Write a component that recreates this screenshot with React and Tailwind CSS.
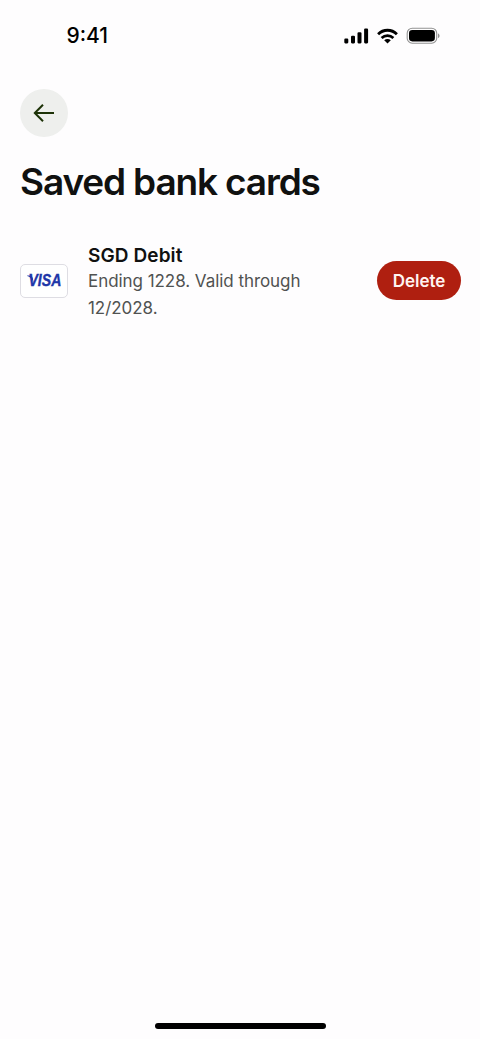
function StatusBar() {
  return (
    <div className="flex h-[72px] items-center justify-between pr-[40px] pl-[66.5px]">
      <span className="text-[21px] leading-6 font-[550] tracking-[0px] text-black">9:41</span>
      <div className="flex items-center">
        <svg className="h-4 w-[25px]" viewBox="0 0 25 16" fill="black" aria-label="Signal">
          <rect x="0.3" y="10.6" width="4" height="4.8" rx="1.1" />
          <rect x="7" y="7.8" width="4" height="7.6" rx="1.1" />
          <rect x="13.5" y="4.3" width="4" height="11.1" rx="1.1" />
          <rect x="20.1" y="0.6" width="4" height="14.8" rx="1.1" />
        </svg>
        <svg className="ml-[8px] h-4 w-[21px]" viewBox="0 0 21 16" fill="none" stroke="black" strokeWidth="2.8" aria-label="Wi-Fi">
          <path d="M1.1 6.2C6.4 .9 14.6.9 19.9 6.2" />
          <path d="M4.6 10C8 6.9 13 6.9 16.4 10" />
          <path d="M7.2 12.2C9.1 10.6 11.9 10.6 13.8 12.2L10.5 15.5Z" fill="black" stroke="none" />
        </svg>
        <svg className="ml-[8px] h-[18px] w-[34px]" viewBox="0 0 34 18" aria-label="Battery">
          <rect x="1.2" y="1.2" width="29.5" height="15" rx="5" fill="none" stroke="#929292" strokeWidth="1.1" />
          <rect x="3" y="3" width="25.9" height="11.4" rx="3.3" fill="black" />
          <path d="M32 6.4c2 .7 2 4 0 4.7Z" fill="#929292" />
        </svg>
      </div>
    </div>
  );
}

function VisaCard() {
  return (
    <div className="flex h-[34px] w-12 shrink-0 items-center justify-center rounded-[5px] border border-[#dedde3] bg-white">
      <svg className="h-6 w-10" viewBox="0 0 40 24" fill="#2036a8">
        <path d="M3.2 6.4H7L8.8 9.1L9.4 13.2C8.1 10 6 7.8 3.2 7Z" />
        <text x="4.5" y="17.2" textLength="32.8" lengthAdjust="spacingAndGlyphs" fontFamily="Liberation Sans, sans-serif" fontSize="15.6" fontStyle="italic" fontWeight="700" stroke="#2036a8" strokeWidth="0.35">VISA</text>
      </svg>
    </div>
  );
}

export default function App() {
  return (
    <main className="flex h-[1039px] w-[480px] flex-col bg-[#fefdfe] font-['Inter',sans-serif]">
      <StatusBar />
      <div className="px-5 pt-[17px]">
        <button aria-label="Back" className="flex size-12 items-center justify-center rounded-full bg-[#eeefed]">
          <svg className="h-5 w-6" viewBox="0 0 24 20" fill="none" stroke="#1d3207" strokeWidth="2">
            <path d="M22 10H3.2M11 1.8L2.8 10L11 18.2" />
          </svg>
        </button>
        <h1 className="mt-[23px] text-[37px] leading-[44px] font-semibold tracking-[-1.15px] whitespace-nowrap text-[#101110]">Saved bank cards</h1>
      </div>
      <section className="mt-[38px] flex items-start pr-[19px] pl-5">
        <div className="pt-[22px]">
          <VisaCard />
        </div>
        <div className="ml-5 w-[240px]">
          <h2 className="text-[19px] leading-[27px] font-semibold tracking-[0.1px] text-[#101110]">SGD Debit</h2>
          <p className="-mt-px text-[17px] leading-[27px] tracking-[-0.05px] text-[#505251]">Ending 1228. Valid through 12/2028.</p>
        </div>
        <button className="mt-[19px] ml-auto flex h-[39px] w-[84px] items-center justify-center rounded-full bg-[#af1f10] pt-[2px] text-[17px] font-semibold text-[#fff4f1]">Delete</button>
      </section>
      <div className="mt-auto mb-[10px] h-[6px] w-[171px] self-center rounded-full bg-black" />
    </main>
  );
}
